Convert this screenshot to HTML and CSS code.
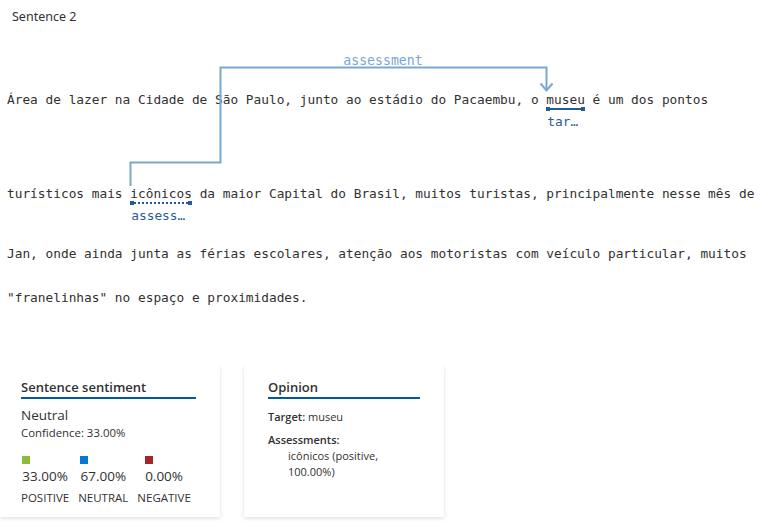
FILE: index.html
```html
<!DOCTYPE html>
<html lang="pt">
<head>
<meta charset="utf-8">
<title>Sentence 2</title>
<link rel="stylesheet" href="styles.css">
</head>
<body>
<div class="page">
  <div class="title">Sentence 2</div>
  <div class="doc">
    <svg class="arcs" width="762" height="240" viewBox="0 0 762 240" aria-hidden="false">
      <path d="M130.5 186 V162.5 H220.5 V67.5 H546.5 V90" fill="none" stroke="#7aa7d2" stroke-width="2"/>
      <path d="M540.5 83.5 L546.5 90.5 L552.5 83.5" fill="none" stroke="#7aa7d2" stroke-width="2"/>
      <text x="383" y="65" text-anchor="middle" class="arc-label">assessment</text>
    </svg>
    <div class="line l1">Área de lazer na Cidade de São Paulo, junto ao estádio do Pacaembu, o <span class="tok target">museu<span class="lbl">tar…</span></span> é um dos pontos</div>
    <div class="line l2">turísticos mais <span class="tok assess">icônicos<span class="lbl">assess…</span></span> da maior Capital do Brasil, muitos turistas, principalmente nesse mês de</div>
    <div class="line l3">Jan, onde ainda junta as férias escolares, atenção aos motoristas com veículo particular, muitos</div>
    <div class="line l4">"franelinhas" no espaço e proximidades.</div>
  </div>
  <div class="cards">
    <section class="card card-sentiment">
      <h2 class="card-title">Sentence sentiment</h2>
      <div class="overall">Neutral</div>
      <div class="confidence">Confidence: 33.00%</div>
      <div class="scores">
        <div class="score">
          <div class="score-inner">
            <span class="swatch pos"></span>
            <div class="pct">33.00%</div>
          </div>
          <div class="score-label">POSITIVE</div>
        </div>
        <div class="score">
          <div class="score-inner">
            <span class="swatch neu"></span>
            <div class="pct">67.00%</div>
          </div>
          <div class="score-label">NEUTRAL</div>
        </div>
        <div class="score">
          <div class="score-inner">
            <span class="swatch neg"></span>
            <div class="pct">0.00%</div>
          </div>
          <div class="score-label">NEGATIVE</div>
        </div>
      </div>
    </section>
    <section class="card card-opinion">
      <h2 class="card-title">Opinion</h2>
      <div class="field"><span class="key">Target:</span> museu</div>
      <div class="field assessments">
        <div class="key">Assessments:</div>
        <div class="item">icônicos (positive,<br>100.00%)</div>
      </div>
    </section>
  </div>
</div>
</body>
</html>
```

FILE: styles.css
```css
* { box-sizing: border-box; }
html, body { margin: 0; padding: 0; background: #ffffff; }
body {
  font-family: "Open Sans", "Noto Sans", sans-serif;
  color: #323130;
  width: 762px;
  height: 528px;
  overflow: hidden;
}
.page { position: relative; }
.title {
  font-family: "Noto Sans", "Open Sans", sans-serif;
  font-size: 12.5px;
  line-height: 18px;
  padding: 8px 0 0 12px;
  color: #323130;
}
.doc {
  position: relative;
  margin-top: 64px;
  font-family: "DejaVu Sans Mono", "Liberation Mono", monospace;
  font-size: 12.8px;
  color: #323130;
}
.arcs {
  position: absolute;
  left: 0;
  top: -90px;
  pointer-events: none;
}
.arc-label {
  font-family: "DejaVu Sans Mono", "Liberation Mono", monospace;
  font-size: 13.2px;
  fill: #7aa7d2;
}
.line {
  white-space: pre;
  line-height: 20px;
  padding-left: 7px;
}
.l2 { margin-top: 74px; }
.l3 { margin-top: 40px; }
.l4 { margin-top: 24px; }
.tok { position: relative; display: inline-block; }
.tok::after {
  content: "";
  position: absolute;
  left: 0;
  right: 0;
  top: 17px;
  height: 4px;
}
.target::after {
  background:
    linear-gradient(#1f5c99, #1f5c99) left center / 4px 4px no-repeat,
    linear-gradient(#1f5c99, #1f5c99) right center / 4px 4px no-repeat,
    linear-gradient(#1f5c99, #1f5c99) center / 100% 2px no-repeat;
}
.assess::after {
  background:
    linear-gradient(#1f5c99, #1f5c99) left center / 4px 4px no-repeat,
    linear-gradient(#1f5c99, #1f5c99) right center / 4px 4px no-repeat,
    repeating-linear-gradient(90deg, #1f5c99 0 2px, transparent 2px 4px) center / 100% 2px no-repeat;
}
.lbl {
  position: absolute;
  left: 1px;
  top: 22px;
  color: #1f5c99;
  white-space: pre;
}
.cards {
  display: flex;
  gap: 24px;
  margin-top: 57px;
}
.card {
  background: #ffffff;
  box-shadow: 0 1.6px 3.6px rgba(0,0,0,0.13), 0 0.3px 0.9px rgba(0,0,0,0.11);
  height: 152px;
}
.card-sentiment { width: 220px; padding: 13px 24px 0 21px; }
.card-opinion { width: 200px; padding: 13px 24px 0 24px; }
.card-title {
  margin: 0;
  font-size: 13px;
  font-weight: 600;
  line-height: 18px;
  padding-bottom: 1px;
  border-bottom: 2px solid #005a9e;
  color: #323130;
}
.overall { font-size: 13.5px; line-height: 18px; margin-top: 7px; }
.confidence { font-size: 11.4px; line-height: 16px; margin-top: 1px; }
.scores { display: flex; gap: 9px; margin-top: 15px; }
.score { display: flex; flex-direction: column; align-items: center; }
.score-inner { display: flex; flex-direction: column; align-items: flex-start; }
.swatch { width: 8px; height: 8px; display: block; }
.swatch.pos { background: #8cbd3a; }
.swatch.neu { background: #0078d4; }
.swatch.neg { background: #a4262c; }
.pct { font-size: 13.5px; line-height: 18px; margin-top: 3px; }
.score-label { font-size: 11.5px; line-height: 16px; margin-top: 5px; }
.field { font-size: 11px; line-height: 16px; margin-top: 10px; }
.key { font-weight: 600; }
.assessments { margin-top: 7px; }
.item { padding-left: 20px; }
```
